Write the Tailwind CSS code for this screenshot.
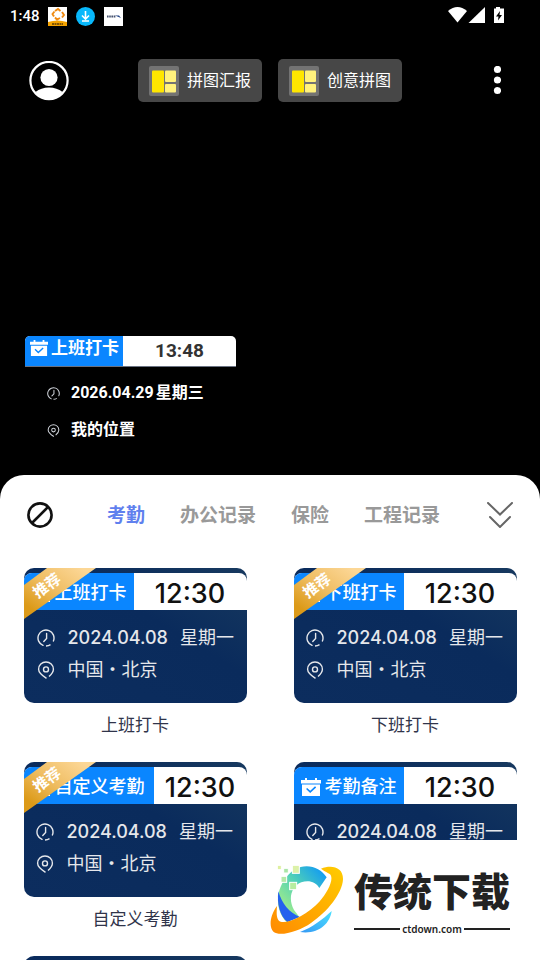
<!DOCTYPE html>
<html lang="zh-CN">
<head>
  <meta charset="UTF-8">
  <meta name="viewport" content="width=device-width, initial-scale=1.0">
  <title>考勤水印相机</title>
  <script src="https://cdn.jsdelivr.net/npm/@tailwindcss/browser@4"></script>
</head>
<body class="relative h-screen flex flex-col overflow-hidden bg-black font-['Roboto','Noto_Sans_CJK_SC',sans-serif]">

  <!-- Shared icons -->
  <svg class="absolute size-0" aria-hidden="true">
    <symbol id="clock" viewBox="0 0 18 18">
      <path d="M6 16.4A8 8 0 1 1 16.400 12M9.6 4.500V9.5L6.800 12.4" fill="none" stroke="currentColor" stroke-width="1.4" stroke-linecap="round"/>
      <path d="M9 17q2.500 0 4.500-1.300" fill="none" stroke="currentColor" stroke-width="1.4"/>
    </symbol>
    <symbol id="pin" viewBox="0 0 18 18">
      <path d="M9.500 17.300C4 13.8 1.6 11.4 1.6 8.2a7.4 7.2 0 0 1 14.8 0c0 3-1.800 5-4.400 7.300" fill="none" stroke="currentColor" stroke-width="1.4" stroke-linejoin="round"/>
      <circle cx="9" cy="8.4" r="2.5" fill="none" stroke="currentColor" stroke-width="1.4"/>
    </symbol>
    <symbol id="calendar" viewBox="0 0 20 20">
      <path d="M0 3h4V1h2v2h8V1h2v2h4v3.500H0z" fill="#fff"/>
      <path d="M1 7.500h18V19H1z" fill="#fff"/>
      <path d="M5.6 11.500l3.600 3.400 5.4-5" fill="none" stroke="#0a86ff" stroke-width="1.600"/>
    </symbol>
    <symbol id="collage" viewBox="0 0 30 30">
      <rect width="30" height="30" rx="2" fill="#737373"/>
      <rect x="3" y="4.500" width="12" height="22" rx="1" fill="#ffe600"/>
      <rect x="16" y="4.500" width="11" height="11.500" rx="1" fill="#fff27d"/>
      <rect x="16" y="18" width="11" height="8.500" rx="1" fill="#fff27d"/>
    </symbol>
    <symbol id="ribbon" viewBox="0 0 72 52">
      <path d="M0 17L23 0H72L0 51z" fill="url(#gold)"/>
    </symbol>
    <defs>
      <linearGradient id="gold" x1="1" y1="0" x2="0" y2="1">
        <stop offset="0.100" stop-color="#fcd796"/>
        <stop offset="0.500" stop-color="#efbd62"/>
        <stop offset="0.850" stop-color="#dc9a18"/>
      </linearGradient>
    </defs>
  </svg>

  <!-- Status bar -->
  <div class="h-8 shrink-0 flex items-center pl-[10px] pr-9 text-white">
    <span class="text-[15px] font-medium">1:48</span>
    <svg class="ml-2 size-[19px]" viewBox="0 0 19 19">
      <rect width="19" height="19" fill="#fff"/>
      <path d="M0 15q9.500-3 19 0v4H0z" fill="#f5a300"/>
      <path d="M4 17h11" stroke="#5c3c00" stroke-width="1.500" stroke-dasharray="2 .5"/>
      <path d="M7 4l3-2 2.500 2M14 5l2 3-2 2.500M12 11l-3 1.500-2-2M6 9.500L4.500 7 6.500 4.500" fill="none" stroke="#f08a10" stroke-width="1.900"/>
    </svg>
    <svg class="ml-[9px] size-[19px]" viewBox="0 0 19 19">
      <circle cx="9.500" cy="9.500" r="9.500" fill="#08b8fb"/>
      <path d="M9.500 4v7M6 8.500l3.500 3.500L13 8.500M6 14h7" fill="none" stroke="#fff" stroke-width="1.600"/>
    </svg>
    <svg class="ml-[9px] size-[19px]" viewBox="0 0 19 19">
      <rect width="19" height="19" fill="#fff"/>
      <path d="M3 9.500h9" stroke="#47536f" stroke-width="2" stroke-dasharray="1.600 .6"/>
      <path d="M11 8.500h4l2 2.500z" fill="#1a3c80"/>
    </svg>
    <svg class="ml-auto h-[18px] w-14" viewBox="0 0 56 18">
      <path d="M0 4Q9.500-4 19 4L9.500 15.500z" fill="#fff"/>
      <path d="M37 0v16H20.500z" fill="#fff"/>
      <path d="M48 0h4v1.500h4V16H46V1.500h2z" fill="#fff"/>
      <path d="M52 4l-4 5.500h2.500L50 13.500l4-5.500h-2.500z" fill="#000"/>
    </svg>
  </div>

  <!-- Top actions -->
  <header class="mt-[27px] shrink-0 flex items-center justify-between px-[29px]">
    <button type="button" aria-label="个人中心">
      <svg class="size-10" viewBox="0 0 40 40">
        <circle cx="20" cy="19.500" r="18.600" fill="none" stroke="#fff" stroke-width="2.200"/>
        <circle cx="20" cy="16.500" r="8.600" fill="#fff"/>
        <path d="M6.500 31Q12 26.500 20 26.500T33.500 31Q28 38.500 20 38.500T6.500 31z" fill="#fff"/>
      </svg>
    </button>
    <div class="flex gap-4">
      <button type="button" class="h-[43px] w-[124px] flex items-center gap-2 pl-[11px] rounded-[5px] bg-[#474747] text-white text-base">
        <svg class="size-[30px]"><use href="#collage"/></svg>拼图汇报
      </button>
      <button type="button" class="h-[43px] w-[124px] flex items-center gap-2 pl-[11px] rounded-[5px] bg-[#474747] text-white text-base">
        <svg class="size-[30px]"><use href="#collage"/></svg>创意拼图
      </button>
    </div>
    <button type="button" class="w-10 flex justify-end pr-[10px]" aria-label="更多">
      <svg class="h-[30px] w-2" viewBox="0 0 8 30" fill="#fff">
        <circle cx="4.500" cy="3.500" r="3.600"/><circle cx="4.500" cy="14" r="3.600"/><circle cx="4.500" cy="24.500" r="3.600"/>
      </svg>
    </button>
  </header>

  <!-- Watermark preview -->
  <section class="mt-[234px] ml-[25px] w-[211px] h-[139px] shrink-0 text-white">
    <div class="h-[31px] flex rounded-t-[5px] overflow-hidden bg-white border-b border-gray-500">
      <div class="w-[98px] flex gap-[3px] pl-[5px] bg-[#0a86ff] text-[17px]/[24px] font-bold whitespace-nowrap">
        <svg class="mt-[3px] size-[18px]"><use href="#calendar"/></svg>上班打卡
      </div>
      <div class="flex-1 flex items-center justify-center text-[19px] font-bold text-[#333]">13:48</div>
    </div>
    <div class="mt-[14px] ml-[22px] flex items-center gap-[11px] text-base/[24px] font-bold whitespace-nowrap">
      <svg class="size-[13px] text-gray-300"><use href="#clock"/></svg>
      <span class="flex gap-[2px]"><span>2026.04.29</span><span>星期三</span></span>
    </div>
    <div class="mt-[13px] ml-[22px] flex items-center gap-[11px] text-base/[24px] font-bold">
      <svg class="size-[13px] text-gray-300"><use href="#pin"/></svg>我的位置
    </div>
  </section>

  <!-- Template sheet -->
  <main class="flex-1 min-h-0 overflow-hidden rounded-t-3xl bg-white">
    <nav class="h-20 flex items-center justify-between px-[27px] text-[19px] font-bold text-[#999]">
      <button type="button" aria-label="无水印">
        <svg class="size-[26px]" viewBox="0 0 26 26" fill="none" stroke="#111" stroke-width="2.600">
          <circle cx="13" cy="13" r="11.600"/><path d="M5 21L21 5"/>
        </svg>
      </button>
      <div class="flex gap-[35px] pt-[2px] pl-[7px]">
        <button type="button" class="text-[#5f80ee]">考勤</button>
        <button type="button">办公记录</button>
        <button type="button">保险</button>
        <button type="button">工程记录</button>
      </div>
      <button type="button" aria-label="收起">
        <svg class="size-[26px]" viewBox="0 0 26 26" fill="none" stroke="#666" stroke-width="2" stroke-linecap="round">
          <path d="M1 1l12 11.500L25 1M3 15l10 10 10-10"/>
        </svg>
      </button>
    </nav>

    <div class="mt-[13px] grid grid-cols-2 justify-items-center gap-y-6 text-[17px]/[25px] text-[#30344a]">
      <a href="#" class="w-[223px] text-center">
        <div class="relative h-[135px] pt-[5px] rounded-[10px] overflow-hidden bg-linear-to-bl from-[#17395f] via-[#0a2b5c] via-40% to-[#0c2d5e] text-left text-lg/[24px] text-gray-200">
          <div class="h-[37px] flex rounded-t-lg overflow-hidden bg-white">
            <div class="w-[110px] flex items-center gap-1 pt-[2px] pl-[7px] bg-[#0a86ff] font-medium text-white whitespace-nowrap">
              <svg class="size-5"><use href="#calendar"/></svg>上班打卡
            </div>
            <div class="flex-1 flex items-center justify-center pt-1 font-['Inter'] text-[27px] font-medium text-[#111]">12:30</div>
          </div>
          <div class="mt-4 pl-[13px] flex items-center gap-[13px] whitespace-nowrap">
            <svg class="size-[18px]"><use href="#clock"/></svg>
            <span class="flex gap-3 font-['Inter','Noto_Sans_CJK_SC'] font-medium"><span>2024.04.08</span><span class="font-normal">星期一</span></span>
          </div>
          <div class="mt-2 pl-[13px] flex items-center gap-[13px]">
            <svg class="size-[18px]"><use href="#pin"/></svg>中国・北京
          </div>
          <svg class="absolute left-0 top-0 w-[72px] h-[52px]"><use href="#ribbon"/></svg>
          <span class="absolute left-2 top-[6px] -rotate-36 text-[15px]/[24px] font-bold text-white">推荐</span>
        </div>
        <p class="mt-[10px]">上班打卡</p>
      </a>

      <a href="#" class="w-[223px] text-center">
        <div class="relative h-[135px] pt-[5px] rounded-[10px] overflow-hidden bg-linear-to-bl from-[#17395f] via-[#0a2b5c] via-40% to-[#0c2d5e] text-left text-lg/[24px] text-gray-200">
          <div class="h-[37px] flex rounded-t-lg overflow-hidden bg-white">
            <div class="w-[110px] flex items-center gap-1 pt-[2px] pl-[7px] bg-[#0a86ff] font-medium text-white whitespace-nowrap">
              <svg class="size-5"><use href="#calendar"/></svg>下班打卡
            </div>
            <div class="flex-1 flex items-center justify-center pt-1 font-['Inter'] text-[27px] font-medium text-[#111]">12:30</div>
          </div>
          <div class="mt-4 pl-3 flex items-center gap-[13px] whitespace-nowrap">
            <svg class="size-[18px]"><use href="#clock"/></svg>
            <span class="flex gap-3 font-['Inter','Noto_Sans_CJK_SC'] font-medium"><span>2024.04.08</span><span class="font-normal">星期一</span></span>
          </div>
          <div class="mt-2 pl-3 flex items-center gap-[13px]">
            <svg class="size-[18px]"><use href="#pin"/></svg>中国・北京
          </div>
          <svg class="absolute left-0 top-0 w-[72px] h-[52px]"><use href="#ribbon"/></svg>
          <span class="absolute left-2 top-[6px] -rotate-36 text-[15px]/[24px] font-bold text-white">推荐</span>
        </div>
        <p class="mt-[10px]">下班打卡</p>
      </a>

      <a href="#" class="w-[223px] text-center">
        <div class="relative h-[135px] pt-[5px] rounded-[10px] overflow-hidden bg-linear-to-bl from-[#17395f] via-[#0a2b5c] via-40% to-[#0c2d5e] text-left text-lg/[24px] text-gray-200">
          <div class="h-[37px] flex rounded-t-lg overflow-hidden bg-white">
            <div class="w-[130px] flex items-center gap-1 pt-[2px] pl-[7px] bg-[#0a86ff] font-medium text-white whitespace-nowrap">
              <svg class="size-5"><use href="#calendar"/></svg>自定义考勤
            </div>
            <div class="flex-1 flex items-center justify-center pt-1 font-['Inter'] text-[27px] font-medium text-[#111]">12:30</div>
          </div>
          <div class="mt-4 pl-3 flex items-center gap-[13px] whitespace-nowrap">
            <svg class="size-[18px]"><use href="#clock"/></svg>
            <span class="flex gap-3 font-['Inter','Noto_Sans_CJK_SC'] font-medium"><span>2024.04.08</span><span class="font-normal">星期一</span></span>
          </div>
          <div class="mt-2 pl-3 flex items-center gap-[13px]">
            <svg class="size-[18px]"><use href="#pin"/></svg>中国・北京
          </div>
          <svg class="absolute left-0 top-0 w-[72px] h-[52px]"><use href="#ribbon"/></svg>
          <span class="absolute left-2 top-[6px] -rotate-36 text-[15px]/[24px] font-bold text-white">推荐</span>
        </div>
        <p class="mt-[10px]">自定义考勤</p>
      </a>

      <a href="#" class="w-[223px] text-center">
        <div class="relative h-[135px] pt-[5px] rounded-[10px] overflow-hidden bg-linear-to-bl from-[#17395f] via-[#0a2b5c] via-40% to-[#0c2d5e] text-left text-lg/[24px] text-gray-200">
          <div class="h-[37px] flex rounded-t-lg overflow-hidden bg-white">
            <div class="w-[110px] flex items-center gap-1 pt-[2px] pl-[7px] bg-[#0a86ff] font-medium text-white whitespace-nowrap">
              <svg class="size-5"><use href="#calendar"/></svg>考勤备注
            </div>
            <div class="flex-1 flex items-center justify-center pt-1 font-['Inter'] text-[27px] font-medium text-[#111]">12:30</div>
          </div>
          <div class="mt-4 pl-3 flex items-center gap-[13px] whitespace-nowrap">
            <svg class="size-[18px]"><use href="#clock"/></svg>
            <span class="flex gap-3 font-['Inter','Noto_Sans_CJK_SC'] font-medium"><span>2024.04.08</span><span class="font-normal">星期一</span></span>
          </div>
        </div>
      </a>

      <a href="#" class="w-[223px]" aria-label="更多模板">
        <div class="h-[135px] rounded-[10px] bg-linear-to-bl from-[#17395f] via-[#0a2b5c] via-40% to-[#0c2d5e]"></div>
      </a>
    </div>
  </main>

  <!-- Site badge -->
  <aside class="absolute right-0 bottom-0 w-[270px] h-[120px] flex items-center gap-[10px] bg-white text-[#222]">
    <svg class="w-[74px] h-[70px] shrink-0" viewBox="30 345 222 210">
      <defs>
        <linearGradient id="ring" x1="0" y1="1" x2="1" y2="0">
          <stop offset="0.150" stop-color="#a5ee88"/>
          <stop offset="0.550" stop-color="#4fd0b8"/>
          <stop offset="0.900" stop-color="#169fee"/>
        </linearGradient>
        <linearGradient id="swoosh" x1="1" y1="0" x2="0" y2="1">
          <stop offset="0" stop-color="#ffcc00"/>
          <stop offset="1" stop-color="#ff8a00"/>
        </linearGradient>
        <linearGradient id="tail" x1="1" y1="0" x2="0" y2="1">
          <stop offset="0" stop-color="#4be0ff"/>
          <stop offset="1" stop-color="#3598f4"/>
        </linearGradient>
      </defs>
      <path d="M122 351C152 343 184 356 200 382L178 414C168 396 146 389 124 397C96 408 82 444 102 480L118 501L80 516C54 492 46 448 62 410C74 382 96 358 122 351z" fill="url(#ring)"/>
      <path d="M55 424C66 462 88 488 119 501L82 516C60 498 50 462 55 424z" fill="#2462ee"/>
      <path d="M120 546C158 532 188 508 215 483C210 522 174 554 120 546z" fill="url(#tail)"/>
      <path d="M183 356C216 343 250 352 249 388C247 430 202 486 154 518C116 545 60 560 41 546C25 532 31 494 51 468C49 492 49 510 62 515C86 522 145 492 178 455C204 425 223 386 210 373C204 367 195 366 183 356z" fill="url(#swoosh)"/>
      <g stroke="#fff" stroke-width="3">
        <rect x="52" y="346" width="12" height="13" fill="#def0a0"/>
        <rect x="71" y="355" width="14" height="14" fill="#a9e5a6"/>
        <rect x="97" y="346" width="21" height="24" fill="#dcf1a8"/>
        <rect x="63" y="379" width="17" height="18" fill="#b4e8a8"/>
        <rect x="89" y="397" width="21" height="22" fill="#b7eda0"/>
      </g>
    </svg>
    <div class="w-[156px]">
      <p class="font-['Noto_Sans_CJK_SC'] text-[39px]/[50px] font-black whitespace-nowrap">传统下载</p>
      <div class="mt-2 flex items-center gap-[2px]">
        <span class="h-[2px] flex-1 bg-[#222]"></span>
        <span class="font-['Noto_Sans'] text-[10px]/[14px] font-semibold">ctdown.com</span>
        <span class="h-[2px] flex-1 bg-[#222]"></span>
      </div>
    </div>
  </aside>

</body>
</html>
